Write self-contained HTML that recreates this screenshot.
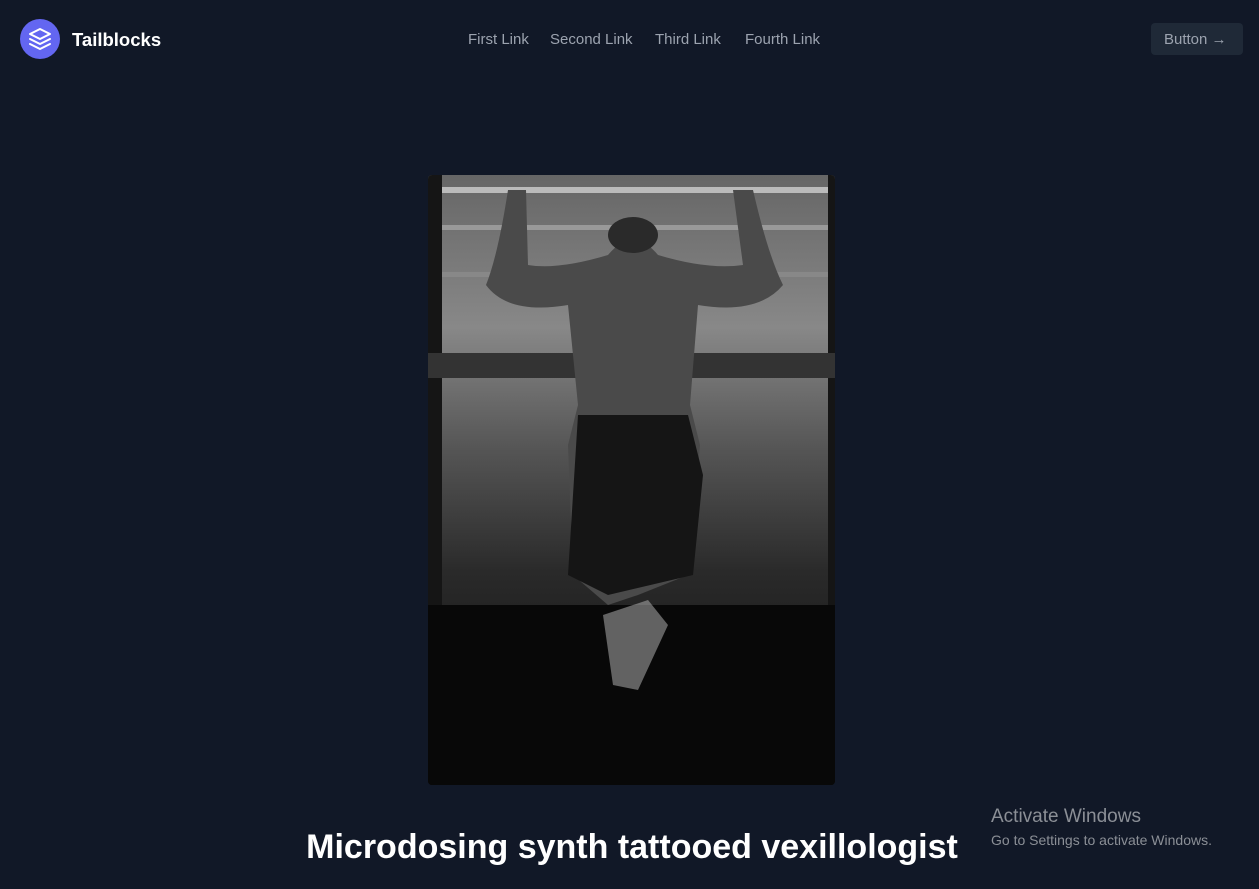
<!DOCTYPE html>
<html><head><meta charset="utf-8"><style>
*{margin:0;padding:0;box-sizing:border-box}
body{width:1259px;height:889px;background:#111827;font-family:"Liberation Sans",sans-serif;position:relative;overflow:hidden;color:#9ca3af}
.logo{position:absolute;left:20px;top:19px;width:40px;height:40px;border-radius:50%;background:#6366f1;display:flex;align-items:center;justify-content:center}
.brand{position:absolute;left:72px;top:29px;font-size:18.5px;font-weight:bold;color:#fff}
.nav{position:absolute;top:31px;font-size:15px;color:#9ca3af}
.btn{position:absolute;left:1151px;top:23px;width:92px;height:32px;background:#1f2937;border-radius:4px;color:#9ca3af;font-size:15px;padding:8px 0 0 13px}
.img{position:absolute;left:428px;top:175px;width:407px;height:610px;border-radius:4px;overflow:hidden;background:linear-gradient(#666 0%,#888 25%,#555 45%,#2a2a2a 65%,#0a0a0a 100%)}
h1{position:absolute;left:0;width:1264px;text-align:center;top:828px;font-size:34px;color:#fff;font-weight:bold}
.aw{position:absolute;left:991px;top:806px;color:#8b8f96;font-size:19px}
.aw2{position:absolute;left:991px;top:832px;color:#8b8f96;font-size:14px}
</style></head><body>
<div class="logo"><svg width="24" height="24" viewBox="0 0 24 24" fill="none" stroke="#fff" stroke-width="2" stroke-linecap="round" stroke-linejoin="round"><path d="M12 2L2 7l10 5 10-5-10-5z"/><path d="M2 17l10 5 10-5"/><path d="M2 12l10 5 10-5"/></svg></div>
<div class="brand">Tailblocks</div>
<div class="nav" style="left:468px">First Link</div>
<div class="nav" style="left:550px">Second Link</div>
<div class="nav" style="left:655px">Third Link</div>
<div class="nav" style="left:745px">Fourth Link</div>
<div class="btn">Button →</div>
<div class="img"><svg width="407" height="610" viewBox="0 0 407 610">
<rect x="0" y="12" width="407" height="6" fill="#bbb"/>
<rect x="0" y="50" width="407" height="5" fill="#999"/>
<rect x="0" y="97" width="407" height="5" fill="#888"/>
<rect x="0" y="0" width="14" height="610" fill="#151515"/>
<rect x="400" y="0" width="7" height="610" fill="#151515"/>
<rect x="0" y="178" width="407" height="25" fill="#333"/>
<rect x="0" y="430" width="407" height="180" fill="#080808"/>
<path d="M80 15 Q70 80 58 110 Q80 140 140 130 L150 230 L140 270 L145 400 L180 430 L210 420 L260 400 L272 270 L262 230 L270 130 Q330 140 355 110 Q340 80 325 15 L305 15 L315 90 Q280 95 230 80 Q205 50 180 80 Q130 95 100 90 L98 15 Z" fill="#4a4a4a"/>
<path d="M150 240 L260 240 L275 300 L265 400 L180 420 L140 400 Z" fill="#151515"/>
<ellipse cx="205" cy="60" rx="25" ry="18" fill="#2a2a2a"/>
<path d="M175 440 L185 510 L210 515 L240 450 L220 425 Z" fill="#bbb" opacity=".5"/>
</svg></div>
<h1>Microdosing synth tattooed vexillologist</h1>
<div class="aw">Activate Windows</div>
<div class="aw2">Go to Settings to activate Windows.</div>
</body></html>
